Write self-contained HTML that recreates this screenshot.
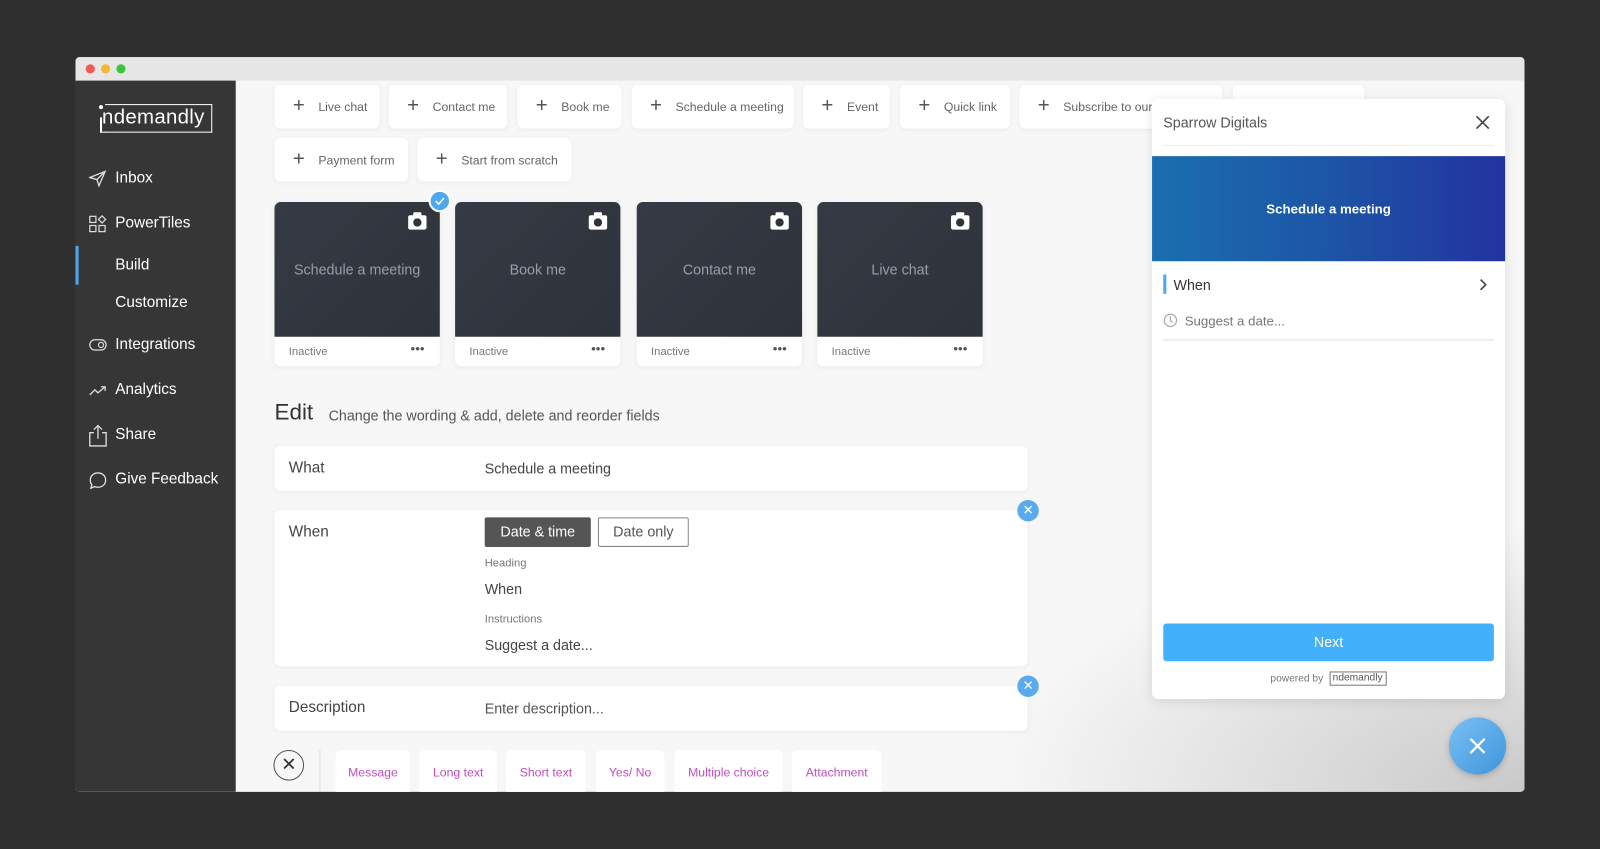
<!DOCTYPE html>
<html><head><meta charset="utf-8"><style>
*{box-sizing:border-box;margin:0;padding:0}
body{width:1600px;height:849px;overflow:hidden;background:#2f2f2f;font-family:"Liberation Sans",sans-serif}
#s{position:absolute;left:0;top:0;width:1568px;height:832px;transform:scale(1.02041);transform-origin:0 0}
.a{position:absolute}
.win{left:74px;top:56px;width:1420px;height:720px;background:#f7f7f7;overflow:hidden;border-radius:4px}
.tb{left:0;top:0;width:1420px;height:23px;background:#e6e6e6}
.dot{top:7px;width:9px;height:9px;border-radius:50%}
.side{left:0;top:23px;width:157px;height:697px;background:#363636;color:#fff}
.nav{left:39px;font-size:15px;color:#fff}
.ic{left:13px;width:18px;height:18px}
.btn{background:#fff;border-radius:6px;height:43px;font-size:12px;color:#666;box-shadow:0 1px 4px rgba(0,0,0,.05)}
.btn b{position:absolute;left:18px;top:12px;font-weight:normal;font-size:20px;color:#555;line-height:18px}
.btn span{position:absolute;left:43px;top:15px}
.tile{width:162px;height:161px;background:#fff;border-radius:6px;box-shadow:0 1px 5px rgba(0,0,0,.06)}
.tile .d{position:absolute;left:0;top:0;width:162px;height:132px;background:linear-gradient(135deg,#353a44,#2e323a);border-radius:6px 6px 0 0;color:#9a9ea6;font-size:14px;text-align:center;line-height:132px}
.tile .f{position:absolute;left:14px;top:141px;font-size:11px;color:#777}
.tile .m{position:absolute;right:15px;top:136px;font-size:13px;color:#555;letter-spacing:0}
.cam{position:absolute;right:13px;top:13px;width:18px;height:14px;background:#fff;border-radius:2px}
.cam:before{content:"";position:absolute;left:5px;top:-3px;width:8px;height:4px;background:#fff;border-radius:1px}
.cam:after{content:"";position:absolute;left:5px;top:3px;width:8px;height:8px;border-radius:50%;background:#2f343c;box-shadow:inset 0 0 0 2px #2f343c}
.row{left:195px;width:738px;background:#fff;border-radius:6px;box-shadow:0 1px 5px rgba(0,0,0,.05)}
.lab{position:absolute;left:14px;font-size:15px;color:#444}
.val{position:absolute;left:206px;font-size:14px;color:#444}
.rm{width:21px;height:21px;border-radius:50%;background:#5aaaf0;color:#fff;font-size:13px;text-align:center;line-height:20px}
.chip{top:679px;height:42px;background:#fff;border-radius:6px 6px 0 0;color:#c04ec0;font-size:12px;text-align:center;padding-top:15px}
</style></head><body><div id="s">
<div class="a win">
 <div class="a tb"></div>
 <div class="a" style="left:157px;top:23px;width:1263px;height:697px;background:radial-gradient(ellipse 520px 260px at 100% 100%,#c9c9c9 0%,rgba(247,247,247,0) 100%)"></div>
 <div class="a dot" style="left:10px;background:#f25a51"></div>
 <div class="a dot" style="left:25px;background:#f5b731"></div>
 <div class="a dot" style="left:40px;background:#3ec43a"></div>
 <div class="a side">
  <div class="a" style="left:29px;top:23px;width:105px;height:28px;border:1.5px solid #fff;border-left:none"></div>
  <div class="a" style="left:24px;top:36px;width:1.5px;height:15px;background:#fff"></div>
  <div class="a" style="left:24px;top:49.5px;width:6px;height:1.5px;background:#fff"></div>
  <div class="a" style="left:23px;top:24px;width:4px;height:4px;border-radius:50%;background:#fff"></div>
  <div class="a" style="left:26px;top:25px;font-size:20px;color:#fff;letter-spacing:.3px">ndemandly</div>
  <svg class="a ic" style="top:87px" viewBox="0 0 18 18" fill="none" stroke="#ddd" stroke-width="1.3"><path d="M1 8 L16 2 L10 16 L8 10 Z M8 10 L16 2"/></svg>
  <div class="a nav" style="top:87px">Inbox</div>
  <svg class="a ic" style="top:132px" viewBox="0 0 18 18" fill="none" stroke="#ddd" stroke-width="1.2"><rect x="1" y="1" width="6" height="6"/><rect x="1" y="10" width="6" height="6"/><rect x="10" y="10" width="6" height="6"/><path d="M13 0.5 L16.5 4 L13 7.5 L9.5 4Z"/></svg>
  <div class="a nav" style="top:131px">PowerTiles</div>
  <div class="a" style="left:0;top:162px;width:3px;height:38px;background:#4ea8f0"></div>
  <div class="a nav" style="top:172px">Build</div>
  <div class="a nav" style="top:209px">Customize</div>
  <svg class="a ic" style="top:250px" viewBox="0 0 18 18" fill="none" stroke="#ddd" stroke-width="1.2"><rect x="1" y="4" width="16" height="10" rx="5"/><circle cx="12" cy="9" r="2.5"/></svg>
  <div class="a nav" style="top:250px">Integrations</div>
  <svg class="a ic" style="top:295px" viewBox="0 0 18 18" fill="none" stroke="#ddd" stroke-width="1.3"><path d="M1 13 L6 8 L9 11 L16 5 M12 5 H16 V9"/></svg>
  <div class="a nav" style="top:294px">Analytics</div>
  <svg class="a ic" style="top:337px;height:22px" viewBox="0 0 18 22" fill="none" stroke="#ddd" stroke-width="1.3"><path d="M5 8 H1 V21 H17 V8 H13 M9 14 V1 M5 5 L9 1 L13 5"/></svg>
  <div class="a nav" style="top:338px">Share</div>
  <svg class="a ic" style="top:383px" viewBox="0 0 18 18" fill="none" stroke="#ddd" stroke-width="1.3"><path d="M9 1.5 C13.5 1.5 16.5 4.5 16.5 8.5 C16.5 12.5 13.5 15.5 9 15.5 C7.8 15.5 6.8 15.3 5.8 14.9 L2 16.5 L3 13 C2 11.8 1.5 10.2 1.5 8.5 C1.5 4.5 4.5 1.5 9 1.5Z"/></svg>
  <div class="a nav" style="top:382px">Give Feedback</div>
 </div>
 <div class="a" style="left:157px;top:23px;width:1263px;height:697px">
  <div class="a btn" style="left:38px;top:4px;width:103px"><b>+</b><span>Live chat</span></div>
  <div class="a btn" style="left:150px;top:4px;width:116px"><b>+</b><span>Contact me</span></div>
  <div class="a btn" style="left:276px;top:4px;width:102px"><b>+</b><span>Book me</span></div>
  <div class="a btn" style="left:388px;top:4px;width:159px"><b>+</b><span>Schedule a meeting</span></div>
  <div class="a btn" style="left:556px;top:4px;width:85px"><b>+</b><span>Event</span></div>
  <div class="a btn" style="left:651px;top:4px;width:108px"><b>+</b><span>Quick link</span></div>
  <div class="a btn" style="left:768px;top:4px;width:199px"><b>+</b><span>Subscribe to our</span></div>
  <div class="a btn" style="left:977px;top:4px;width:129px"></div>
  <div class="a btn" style="left:38px;top:56px;width:131px"><b>+</b><span>Payment form</span></div>
  <div class="a btn" style="left:178px;top:56px;width:151px"><b>+</b><span>Start from scratch</span></div>

  <div class="a tile" style="left:38px;top:119px"><div class="d">Schedule a meeting</div><div class="cam"></div><div class="f">Inactive</div><div class="m">•••</div></div>
  <div class="a" style="left:189px;top:107px;width:22px;height:22px;border-radius:50%;background:#4ea8f0;border:2px solid #fff"><svg width="18" height="18" viewBox="0 0 18 18" fill="none" stroke="#fff" stroke-width="1.5"><path d="M5 9 L8 12 L13 6"/></svg></div>
  <div class="a tile" style="left:215px;top:119px"><div class="d">Book me</div><div class="cam"></div><div class="f">Inactive</div><div class="m">•••</div></div>
  <div class="a tile" style="left:393px;top:119px"><div class="d">Contact me</div><div class="cam"></div><div class="f">Inactive</div><div class="m">•••</div></div>
  <div class="a tile" style="left:570px;top:119px"><div class="d">Live chat</div><div class="cam"></div><div class="f">Inactive</div><div class="m">•••</div></div>

  <div class="a" style="left:38px;top:312px;font-size:22px;color:#333">Edit</div>
  <div class="a" style="left:91px;top:320px;font-size:14px;color:#555">Change the wording &amp; add, delete and reorder fields</div>
 </div>
 <div class="a row" style="top:381px;height:44px"><div class="lab" style="top:13px">What</div><div class="val" style="top:14px">Schedule a meeting</div></div>
 <div class="a row" style="top:444px;height:153px">
  <div class="lab" style="top:13px">When</div>
  <div class="a" style="left:206px;top:7px;width:104px;height:29px;background:#555;border-radius:2px;color:#fff;font-size:14px;text-align:center;line-height:29px">Date &amp; time</div>
  <div class="a" style="left:317px;top:7px;width:89px;height:29px;border:1px solid #888;border-radius:2px;color:#555;font-size:14px;text-align:center;line-height:27px">Date only</div>
  <div class="val" style="top:46px;font-size:11px;color:#777">Heading</div>
  <div class="val" style="top:69px">When</div>
  <div class="val" style="top:101px;font-size:11px;color:#777">Instructions</div>
  <div class="val" style="top:124px">Suggest a date...</div>
 </div>
 <div class="a rm" style="left:923px;top:434px">✕</div>
 <div class="a row" style="top:616px;height:44px"><div class="lab" style="top:13px">Description</div><div class="val" style="top:14px;color:#555">Enter description...</div></div>
 <div class="a rm" style="left:923px;top:606px">✕</div>
 <div class="a" style="left:194px;top:679px;width:30px;height:30px;border-radius:50%;border:1px solid #555;text-align:center;line-height:27px;font-size:18px;color:#333">✕</div>
 <div class="a" style="left:239px;top:679px;width:1px;height:41px;background:#ddd"></div>
 <div class="a chip" style="left:255px;width:73px">Message</div>
 <div class="a chip" style="left:337px;width:76px">Long text</div>
 <div class="a chip" style="left:422px;width:78px">Short text</div>
 <div class="a chip" style="left:510px;width:67px">Yes/ No</div>
 <div class="a chip" style="left:587px;width:106px">Multiple choice</div>
 <div class="a chip" style="left:702px;width:88px">Attachment</div>
 <div class="a" style="left:1055px;top:41px;width:346px;height:588px;background:#fff;border-radius:6px;box-shadow:0 2px 12px rgba(0,0,0,.1)">
  <div class="a" style="left:11px;top:15px;font-size:14px;color:#555">Sparrow Digitals</div>
  <svg class="a" style="left:316px;top:15px" width="16" height="16" viewBox="0 0 16 16" stroke="#444" stroke-width="1.6"><path d="M2 2 L14 14 M14 2 L2 14"/></svg>
  <div class="a" style="left:11px;top:45px;width:324px;height:1px;background:#eee"></div>
  <div class="a" style="left:0;top:56px;width:346px;height:103px;background:linear-gradient(90deg,#1a6fb0,#1d55a6 50%,#2233a0)"></div>
  <div class="a" style="left:0;top:100px;width:346px;text-align:center;color:#fff;font-size:13px;font-weight:bold">Schedule a meeting</div>
  <div class="a" style="left:11px;top:172px;width:3px;height:19px;background:#4ea8f0"></div>
  <div class="a" style="left:21px;top:174px;font-size:14px;color:#333">When</div>
  <svg class="a" style="left:321px;top:176px" width="8" height="12" viewBox="0 0 8 12" fill="none" stroke="#444" stroke-width="1.6"><path d="M1 1 L6 6 L1 11"/></svg>
  <svg class="a" style="left:11px;top:210px" width="14" height="14" viewBox="0 0 14 14" fill="none" stroke="#aaa" stroke-width="1.2"><circle cx="7" cy="7" r="6"/><path d="M7 3 V7 L9 9"/></svg>
  <div class="a" style="left:32px;top:210px;font-size:13px;color:#777">Suggest a date...</div>
  <div class="a" style="left:11px;top:235px;width:324px;height:2px;background:#eee"></div>
  <div class="a" style="left:11px;top:514px;width:324px;height:37px;background:#42b0fa;border-radius:3px;color:#fff;text-align:center;line-height:37px;font-size:14px">Next</div>
  <div class="a" style="left:116px;top:563px;font-size:10px;color:#777">powered by</div>
  <div class="a" style="left:174px;top:561px;width:56px;height:14px;border:1px solid #777;border-left-width:1px;font-size:10px;color:#555;line-height:12px;padding-left:2px">ndemandly</div>
 </div>
 <div class="a" style="left:1346px;top:647px;width:56px;height:56px;border-radius:50%;background:linear-gradient(135deg,#7cc0f5,#3d95db);box-shadow:0 2px 6px rgba(0,0,0,.2)"><svg width="56" height="56" viewBox="0 0 56 56" stroke="#fff" stroke-width="2.2"><path d="M21 21 L35 35 M35 21 L21 35"/></svg></div>
</div>
</div></body></html>
